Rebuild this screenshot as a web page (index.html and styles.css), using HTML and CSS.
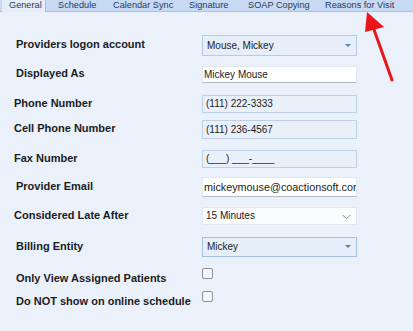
FILE: index.html
```html
<!DOCTYPE html>
<html lang="en">
<head>
    <meta charset="UTF-8">
    <meta name="viewport" content="width=device-width, initial-scale=1.0">
    <title>Provider Settings</title>
    <link rel="stylesheet" href="styles.css">
</head>
<body>
    <div class="tabs">
        <div class="tab active">General</div>
        <div class="tab">Schedule</div>
        <div class="tab">Calendar Sync</div>
        <div class="tab">Signature</div>
        <div class="tab">SOAP Copying</div>
        <div class="tab">Reasons for Visit</div>
    </div>

    <div class="panel">
        <div class="row r1">
            <div class="label">Providers logon account</div>
            <div class="field combo">Mouse, Mickey<span class="arrow"></span></div>
        </div>
        <div class="row r2">
            <div class="label">Displayed As</div>
            <div class="field white">Mickey Mouse</div>
        </div>
        <div class="row r3">
            <div class="label left">Phone Number</div>
            <div class="field plain">(111) 222-3333</div>
        </div>
        <div class="row r4">
            <div class="label left">Cell Phone Number</div>
            <div class="field plain">(111) 236-4567</div>
        </div>
        <div class="row r5">
            <div class="label left">Fax Number</div>
            <div class="field plain">(___) ___-____</div>
        </div>
        <div class="row r6">
            <div class="label">Provider Email</div>
            <div class="field white email">mickeymouse@coactionsoft.com</div>
        </div>
        <div class="row r7">
            <div class="label left">Considered Late After</div>
            <div class="field select">15 Minutes
                <svg class="chevron" width="9" height="6" viewBox="0 0 9 6"><path d="M0.5 0.8 L4.5 4.8 L8.5 0.8" fill="none" stroke="#7d8591" stroke-width="1"/></svg>
            </div>
        </div>
        <div class="row r8">
            <div class="label">Billing Entity</div>
            <div class="field combo blue">Mickey<span class="arrow"></span></div>
        </div>
        <div class="row check r9">
            <div class="label">Only View Assigned Patients</div>
            <div class="checkbox"></div>
        </div>
        <div class="row check r10">
            <div class="label">Do NOT show on online schedule</div>
            <div class="checkbox"></div>
        </div>
    </div>

    <svg class="pointer" width="413" height="331" viewBox="0 0 413 331">
        <line x1="392" y1="80" x2="372" y2="24" stroke="#e8161b" stroke-width="3" stroke-linecap="round"/>
        <polygon points="367,12 365,32 384,27" fill="#e8161b"/>
    </svg>
</body>
</html>
```

FILE: styles.css
```css
body {
    margin: 0;
    width: 413px;
    height: 331px;
    overflow: hidden;
    background: #eaf1fb;
    font-family: "Liberation Sans", Arial, sans-serif;
    position: relative;
}
.tabs {
    display: flex;
    height: 11px;
    padding-left: 2px;
    background: #c8daf3;
    border-bottom: 1px solid #a9c1e4;
    font-size: 9.2px;
    color: #1f3a60;
}
.tab {
    box-sizing: border-box;
    padding-left: 7px;
    line-height: 11px;
    white-space: nowrap;
}
.tab:nth-child(1) { width: 44px; }
.tab:nth-child(2) { width: 60px; padding-left: 12px; }
.tab:nth-child(3) { width: 76px; }
.tab:nth-child(4) { width: 59px; }
.tab:nth-child(5) { width: 77px; }
.tab.active {
    background: #e5edf8;
    border-right: 1px solid #a9c1e4;
    height: 12px;
}
.panel {
    display: flex;
    flex-direction: column;
    padding: 23px 0 0 14px;
}
.row {
    display: flex;
    align-items: center;
}
.label {
    width: 188px;
    padding-left: 2px;
    box-sizing: border-box;
    font-size: 11px;
    font-weight: bold;
    color: #1c1c1c;
    margin-top: -3px;
    white-space: nowrap;
}
.label.left { padding-left: 0; }
.field {
    width: 155px;
    box-sizing: border-box;
    font-size: 10px;
    color: #1c1c1c;
    padding-left: 4px;
    white-space: nowrap;
    overflow: hidden;
    position: relative;
}
.combo {
    background: #e6eef9;
    border: 1px solid #b8cbe6;
}
.combo.blue { border-color: #a6c0e5; }
.arrow {
    position: absolute;
    right: 5px;
    top: 50%;
    margin-top: -2px;
    border-left: 3px solid transparent;
    border-right: 3px solid transparent;
    border-top: 3px solid #5b7fb3;
}
.white {
    background: #fff;
    border: 1px solid #e3e8ef;
    border-bottom-color: #b4bcc8;
    padding-left: 1px;
}
.email { font-size: 10.8px; }
.plain {
    background: #e9f0fa;
    border: 1px solid #bed0e9;
    padding-left: 3px;
}
.select {
    background: #fbfcfe;
    border: 1px solid #e2e7ee;
    padding-left: 3px;
}
.chevron {
    position: absolute;
    right: 5px;
    top: 6px;
}
.r1 { height: 21px; }
.r1 .field { height: 21px; line-height: 19px; }
.r2 { height: 17px; margin-top: 10px; }
.r2 .field { height: 17px; line-height: 15px; }
.r3 { height: 18px; margin-top: 12px; }
.r3 .field { height: 18px; line-height: 16px; }
.r4 { height: 19px; margin-top: 7px; }
.r4 .field { height: 19px; line-height: 17px; }
.r5 { height: 18px; margin-top: 11px; }
.r5 .field { height: 18px; line-height: 16px; }
.r6 { height: 20px; margin-top: 9px; }
.r6 .field { height: 20px; line-height: 18px; }
.r7 { height: 18px; margin-top: 10px; }
.r7 .field { height: 18px; line-height: 16px; }
.r8 { height: 20px; margin-top: 12px; }
.r8 .field { height: 20px; line-height: 18px; }
.check {
    align-items: flex-start;
    height: 12px;
}
.check .label { margin-top: 4px; }
.r9 { margin-top: 11px; }
.r10 { margin-top: 11px; }
.checkbox {
    width: 11px;
    height: 11px;
    box-sizing: border-box;
    border: 1px solid #8c9199;
    border-radius: 2px;
    background: #f3f5f8;
}
.pointer {
    position: absolute;
    left: 0;
    top: 0;
    pointer-events: none;
}
```
